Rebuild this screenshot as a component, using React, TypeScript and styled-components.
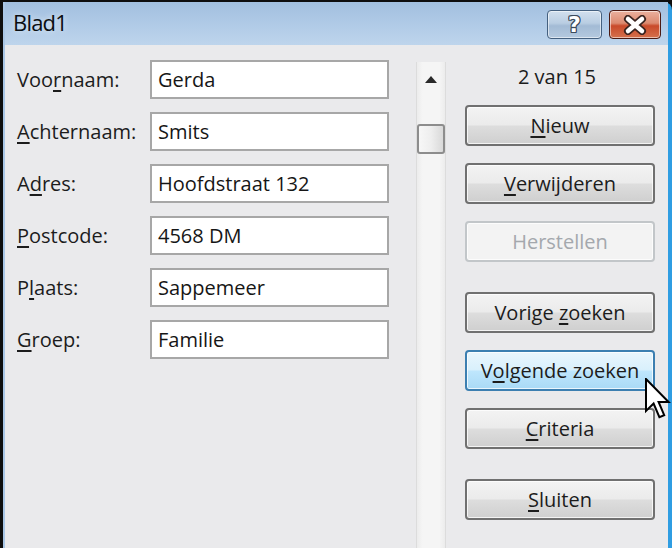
import React from 'react';
import styled, { createGlobalStyle } from 'styled-components';

const GlobalStyle = createGlobalStyle`
  html, body {
    margin: 0;
    padding: 0;
    background: #0e0e0e;
  }

  body {
    font-family: 'Open Sans', 'Noto Sans', 'Liberation Sans', sans-serif;
  }
`;

const Window = styled.div`
  position: relative;
  width: 672px;
  height: 548px;
  box-sizing: border-box;
  padding: 2px 0 0 3px;
  background: #0e0e0e;
  overflow: hidden;
`;

const Frame = styled.div`
  display: flex;
  flex-direction: column;
  height: 100%;
  box-sizing: border-box;
  border-left: 2px solid #aac7e6;
  border-right: 4px solid #2f9de2;
  border-top-right-radius: 8px;
  background: #eaeaec;
`;

const TitleBar = styled.div`
  display: flex;
  align-items: flex-start;
  height: 43px;
  flex-shrink: 0;
  padding: 0 7px 0 8px;
  background: linear-gradient(#a2bfdf 0%, #b1cbe7 55%, #bed5ec 100%);
`;

const Title = styled.div`
  flex: 1;
  margin-top: 5px;
  font-size: 22px;
  line-height: 30px;
  color: #0a0e12;
  letter-spacing: -0.8px;
  text-shadow: 0 0 6px rgba(255, 255, 255, 0.7);
`;

const CaptionButtons = styled.div`
  display: flex;
  gap: 7px;
  margin-top: 8px;
`;

const CaptionButton = styled.div<{ $variant: 'help' | 'close' }>`
  display: flex;
  align-items: center;
  justify-content: center;
  height: 29px;
  width: ${p => (p.$variant === 'help' ? '55px' : '52px')};
  box-sizing: border-box;
  border-radius: 4px;
  border: 1px solid ${p => (p.$variant === 'help' ? '#44607f' : '#4b1a12')};
  box-shadow: inset 0 0 0 1px rgba(255, 255, 255, 0.55);
  background: ${p =>
    p.$variant === 'help'
      ? 'linear-gradient(#d2e0ee 0%, #b9cde2 45%, #a3bbd5 55%, #b4c9df 100%)'
      : 'linear-gradient(#eab19e 0%, #dc8a70 45%, #c94a2a 55%, #d5714d 100%)'};
`;

const HelpGlyph = styled.span`
  font-family: 'DejaVu Sans', sans-serif;
  font-weight: bold;
  font-size: 22px;
  line-height: 1;
  color: #ffffff;
  text-shadow: 1px 0 #3b4a5c, -1px 0 #3b4a5c, 0 1px #3b4a5c, 0 -1px #3b4a5c,
    1px 1px #3b4a5c, -1px -1px #3b4a5c, 1px -1px #3b4a5c, -1px 1px #3b4a5c;
`;

const Client = styled.div`
  display: flex;
  flex: 1;
  min-height: 0;
`;

const FormColumn = styled.div`
  display: flex;
  flex-direction: column;
  gap: 13px;
  padding: 15px 0 0 12px;
`;

const FieldRow = styled.div`
  display: grid;
  grid-template-columns: 133px 239px;
  align-items: center;
  height: 39px;
`;

const Label = styled.label`
  font-size: 20px;
  color: #1c1c1c;

  u {
    text-underline-offset: 3px;
  }
`;

const TextBox = styled.div`
  height: 39px;
  box-sizing: border-box;
  padding: 0 6px;
  border: 2px solid #a7a7a7;
  background: #ffffff;
  font-size: 20px;
  line-height: 35px;
  color: #161616;
`;

const ScrollTrack = styled.div`
  display: flex;
  flex-direction: column;
  align-items: center;
  width: 30px;
  margin: 17px 0 0 27px;
  box-sizing: border-box;
  border-left: 1px solid #dcdcdc;
  border-right: 1px solid #dcdcdc;
  background: linear-gradient(90deg, #ececec 0%, #f5f5f5 20%, #f5f5f5 80%, #ececec 100%);
`;

const ArrowUp = styled.svg`
  margin-top: 14px;
`;

const Thumb = styled.div`
  width: 28px;
  height: 30px;
  margin-top: 41px;
  box-sizing: border-box;
  border: 2px solid #8d8d8d;
  border-radius: 3px;
  background: linear-gradient(90deg, #f7f7f7 0%, #eeeeee 50%, #d9d9d9 100%);
`;

const ButtonColumn = styled.div`
  display: flex;
  flex-direction: column;
  width: 190px;
  margin-left: 19px;
  padding-top: 18px;
`;

const Counter = styled.div`
  font-size: 20px;
  line-height: 28px;
  text-align: center;
  color: #1c1c1c;
  margin-right: 6px;
`;

type Gap = 'first' | 'normal' | 'group';

const gapSize: Record<Gap, string> = { first: '14px', normal: '17px', group: '30px' };

const Button = styled.div<{ $state?: 'normal' | 'hot' | 'disabled'; $gap?: Gap }>`
  display: flex;
  align-items: center;
  justify-content: center;
  height: 41px;
  margin-top: ${p => gapSize[p.$gap || 'normal']};
  box-sizing: border-box;
  border-radius: 4px;
  font-size: 20px;
  white-space: pre;
  border: 2px solid
    ${p => (p.$state === 'hot' ? '#3c7fb1' : p.$state === 'disabled' ? '#c2c6c9' : '#707070')};
  box-shadow: inset 0 0 0 1px rgba(255, 255, 255, 0.75);
  color: ${p => (p.$state === 'disabled' ? '#a4a8ad' : '#1c1c1c')};
  background: ${p =>
    p.$state === 'hot'
      ? 'linear-gradient(#e9f6fd 0%, #d9f0fc 48%, #bee6fd 52%, #a9daf6 100%)'
      : p.$state === 'disabled'
        ? '#f3f3f3'
        : 'linear-gradient(#f3f3f3 0%, #ebebeb 48%, #dddddd 52%, #cfcfcf 100%)'};

  u {
    text-underline-offset: 3px;
  }
`;

const Cursor = styled.svg`
  position: absolute;
  left: 645px;
  top: 378px;
`;

const fields = [
  { label: <>Voo<u>r</u>naam:</>, value: 'Gerda' },
  { label: <><u>A</u>chternaam:</>, value: 'Smits' },
  { label: <>A<u>d</u>res:</>, value: 'Hoofdstraat 132' },
  { label: <><u>P</u>ostcode:</>, value: '4568 DM' },
  { label: <>P<u>l</u>aats:</>, value: 'Sappemeer' },
  { label: <><u>G</u>roep:</>, value: 'Familie' },
];

const App = () => {
  return (
    <Window>
      <GlobalStyle />
      <Frame>
        <TitleBar>
          <Title>Blad1</Title>
          <CaptionButtons>
            <CaptionButton $variant='help'>
              <HelpGlyph>?</HelpGlyph>
            </CaptionButton>
            <CaptionButton $variant='close'>
              <svg width='26' height='20' viewBox='0 0 26 20'>
                <path d='M6 4 L20 16 M20 4 L6 16' stroke='#3a2420' strokeWidth='8' strokeLinecap='round' />
                <path d='M6 4 L20 16 M20 4 L6 16' stroke='#ffffff' strokeWidth='4.5' strokeLinecap='round' />
              </svg>
            </CaptionButton>
          </CaptionButtons>
        </TitleBar>
        <Client>
          <FormColumn>
            {fields.map((f, i) => (
              <FieldRow key={i}>
                <Label>{f.label}</Label>
                <TextBox>{f.value}</TextBox>
              </FieldRow>
            ))}
          </FormColumn>
          <ScrollTrack>
            <ArrowUp width='12' height='7' viewBox='0 0 12 7'>
              <path d='M6 0 L12 7 L0 7 Z' fill='#2a2a2a' />
            </ArrowUp>
            <Thumb />
          </ScrollTrack>
          <ButtonColumn>
            <Counter>2 van 15</Counter>
            <Button $gap='first'><span><u>N</u>ieuw</span></Button>
            <Button><span><u>V</u>erwijderen</span></Button>
            <Button $state='disabled'><span>Herstellen</span></Button>
            <Button $gap='group'><span>Vorige <u>z</u>oeken</span></Button>
            <Button $state='hot'><span>V<u>o</u>lgende zoeken</span></Button>
            <Button><span><u>C</u>riteria</span></Button>
            <Button $gap='group'><span><u>S</u>luiten</span></Button>
          </ButtonColumn>
        </Client>
      </Frame>
      <Cursor width='26' height='42' viewBox='0 0 13 21'>
        <path
          d='M0.5 0.5 L0.5 16.5 L4.3 12.8 L7.2 19.6 L9.6 18.6 L6.8 12 L11.8 12 Z'
          fill='#ffffff'
          stroke='#000000'
          strokeWidth='1'
          strokeLinejoin='miter'
        />
      </Cursor>
    </Window>
  );
};

export default App;
